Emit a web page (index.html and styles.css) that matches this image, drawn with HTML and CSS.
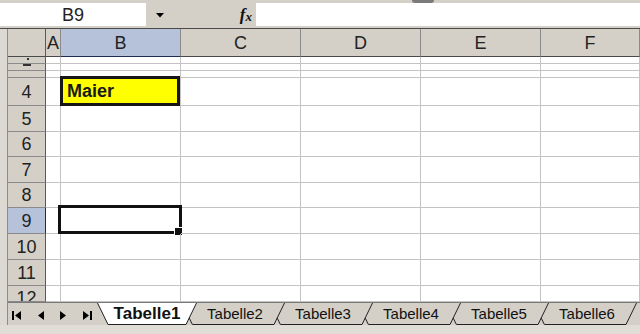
FILE: index.html
```html
<!DOCTYPE html>
<html lang="de">
<head>
  <meta charset="UTF-8" />
  <title>Tabelle1</title>
  <link rel="stylesheet" href="styles.css">
</head>
<body>

  <div class="top-line"><span class="grip"></span></div>

  <div class="formula-bar">
    <div class="name-box">B9</div>
    <div class="fb-tools">
      <svg class="dropdown" width="8" height="5" viewBox="0 0 8 5"><polygon points="0,0 8,0 4,4.5" fill="#000"/></svg>
      <span class="fx">f<sub>x</sub></span>
    </div>
    <div class="formula-input"></div>
  </div>

  <div class="workspace">
    <div class="left-strip"></div>
    <div class="sheet">
      <div class="grid">
        <div class="ch corner"></div><div class="ch">A</div><div class="ch ch-sel">B</div><div class="ch">C</div><div class="ch">D</div><div class="ch">E</div><div class="ch">F</div>

        <div class="rh rh-tiny"><span class="mark-dot"></span></div><div class="c"></div><div class="c"></div><div class="c"></div><div class="c"></div><div class="c"></div><div class="c"></div>
        <div class="rh rh-tiny"><span class="mark-dash"></span></div><div class="c"></div><div class="c"></div><div class="c"></div><div class="c"></div><div class="c"></div><div class="c"></div>
        <div class="rh rh-tiny"></div><div class="c"></div><div class="c"></div><div class="c"></div><div class="c"></div><div class="c"></div><div class="c"></div>

        <div class="rh">4</div><div class="c"></div><div class="c"><div class="name-cell">Maier</div></div><div class="c"></div><div class="c"></div><div class="c"></div><div class="c"></div>
        <div class="rh">5</div><div class="c"></div><div class="c"></div><div class="c"></div><div class="c"></div><div class="c"></div><div class="c"></div>
        <div class="rh">6</div><div class="c"></div><div class="c"></div><div class="c"></div><div class="c"></div><div class="c"></div><div class="c"></div>
        <div class="rh">7</div><div class="c"></div><div class="c"></div><div class="c"></div><div class="c"></div><div class="c"></div><div class="c"></div>
        <div class="rh">8</div><div class="c"></div><div class="c"></div><div class="c"></div><div class="c"></div><div class="c"></div><div class="c"></div>
        <div class="rh rh-sel">9</div><div class="c"></div><div class="c"><div class="selection"></div></div><div class="c"></div><div class="c"></div><div class="c"></div><div class="c"></div>
        <div class="rh">10</div><div class="c"></div><div class="c"></div><div class="c"></div><div class="c"></div><div class="c"></div><div class="c"></div>
        <div class="rh">11</div><div class="c"></div><div class="c"></div><div class="c"></div><div class="c"></div><div class="c"></div><div class="c"></div>
        <div class="rh rh-clip">12</div><div class="c"></div><div class="c"></div><div class="c"></div><div class="c"></div><div class="c"></div><div class="c"></div>
      </div>

      <div class="tabs">
        <svg class="tab-nav" width="89" height="22" viewBox="0 0 89 22">
          <rect x="4" y="8" width="2" height="9" fill="#000"/>
          <polygon points="7,12.5 13,8 13,17" fill="#000"/>
          <polygon points="30,12.5 36,8 36,17" fill="#000"/>
          <polygon points="52,8 58,12.5 52,17" fill="#000"/>
          <polygon points="75,8 81,12.5 75,17" fill="#000"/>
          <rect x="82" y="8" width="2" height="9" fill="#000"/>
        </svg>

        <svg class="tab-edge" viewBox="0 0 12 22">
          <polygon points="0.5,0 12,0 12,21 11,21" fill="#fff"/>
          <path d="M0.5 0 L11 21.5 M11 21.5 H12"/>
        </svg>
        <div class="tab active">Tabelle1</div>
        <svg class="tab-edge" viewBox="0 0 12 22">
          <polygon points="0,0 11.5,0 1,21 0,21" fill="#fff"/>
          <path d="M1 21.5 L11.5 0 M4.2 15 L7.4 21.5 M0 21.5 H1 M7.4 21.5 H12"/>
        </svg>
        <div class="tab">Tabelle2</div>
        <svg class="tab-edge" viewBox="0 0 12 22"><path d="M1 21.5 L11.5 0 M4.2 15 L7.4 21.5 M0 21.5 H1 M7.4 21.5 H12"/></svg>
        <div class="tab">Tabelle3</div>
        <svg class="tab-edge" viewBox="0 0 12 22"><path d="M1 21.5 L11.5 0 M4.2 15 L7.4 21.5 M0 21.5 H1 M7.4 21.5 H12"/></svg>
        <div class="tab">Tabelle4</div>
        <svg class="tab-edge" viewBox="0 0 12 22"><path d="M1 21.5 L11.5 0 M4.2 15 L7.4 21.5 M0 21.5 H1 M7.4 21.5 H12"/></svg>
        <div class="tab">Tabelle5</div>
        <svg class="tab-edge" viewBox="0 0 12 22"><path d="M1 21.5 L11.5 0 M4.2 15 L7.4 21.5 M0 21.5 H1 M7.4 21.5 H12"/></svg>
        <div class="tab">Tabelle6</div>
        <svg class="tab-edge" viewBox="0 0 12 22"><path d="M1 21.5 L11.5 0 M0 21.5 H1"/></svg>
      </div>
    </div>
  </div>

  <div class="status"></div>

</body>
</html>
```

FILE: styles.css
```css
* { box-sizing: border-box; }

body {
  margin: 0;
  width: 640px;
  height: 334px;
  overflow: hidden;
  font-family: 'Liberation Sans', Arial, sans-serif;
  background-color: #fff;
  color: #1e1e1e;
}

.top-line {
  height: 3px;
  background: #d4d0c8;
}

.grip {
  display: block;
  width: 22px;
  height: 3px;
  margin-left: 412px;
  background: #7a7a7a;
  border-radius: 0 0 4px 4px;
}

/* formula bar */

.formula-bar {
  display: flex;
  height: 26px;
  padding-bottom: 2px;
  background: #d4d0c8;
  border-bottom: 1px solid #4a4a4a;
}

.name-box {
  width: 146px;
  background: #fff;
  text-align: center;
  font-size: 18px;
  line-height: 24px;
  color: #222;
}

.fb-tools {
  width: 110px;
  display: flex;
  align-items: center;
}

.dropdown {
  margin-left: 10px;
  margin-top: 1px;
}

.fx {
  margin-left: auto;
  margin-right: 4px;
  font-family: 'Liberation Serif', serif;
  font-style: italic;
  font-weight: bold;
  font-size: 17px;
  color: #111;
}

.fx sub {
  font-size: 13px;
  vertical-align: -1px;
}

.formula-input {
  flex: 1;
  background: #fff;
}

/* sheet */

.workspace {
  display: flex;
  height: 296px;
}

.left-strip {
  width: 8px;
  flex: none;
  background: #dcd9d2;
  border-right: 1px solid #8c8c8c;
}

.sheet {
  flex: 1;
  min-width: 0;
  display: flex;
  flex-direction: column;
  overflow: hidden;
}

.grid {
  display: grid;
  grid-template-columns: 38px 15px 120px 120px 120px 120px 99px;
  grid-template-rows: 28px 7px 7px 7px 28px 26px 25px 26px 25px 26px 26px 26px 16px;
  height: 273px;
  overflow: hidden;
}

.c {
  position: relative;
  border-right: 1px solid #c3c3c3;
  border-bottom: 1px solid #c3c3c3;
}

.ch,
.rh {
  display: flex;
  align-items: center;
  justify-content: center;
  overflow: hidden;
  background: #d4d0c8;
  font-size: 18px;
  color: #222;
}

.ch {
  border-right: 1px solid #8a8a8a;
  border-bottom: 1px solid #4a4a4a;
  padding-top: 1px;
}

.ch.corner {
  border-right-color: #5a5a5a;
}

.ch-sel {
  background: #b6c1da;
  border-bottom-color: #1d2b50;
}

.rh {
  border-right: 1px solid #5a5a5a;
  border-bottom: 1px solid #8a8a8a;
  padding-top: 1px;
}

.rh-sel {
  background: #b6c1da;
  border-right-color: #1d2b50;
}

.rh-tiny {
  align-items: flex-start;
  padding-top: 1px;
}

.rh-clip {
  align-items: flex-start;
  line-height: 24px;
  padding-top: 0;
}

.mark-dot {
  width: 2px;
  height: 2px;
  margin-left: 2px;
  background: #333;
}

.mark-dash {
  width: 8px;
  height: 2px;
  margin-top: -1px;
  background: #333;
}

.name-cell {
  position: absolute;
  top: -2px;
  left: -1px;
  right: 0;
  bottom: -1px;
  background: #ffff00;
  border: 3px solid #161616;
  padding-left: 4px;
  font-weight: bold;
  font-size: 18px;
  line-height: 24px;
  color: #1a1a1a;
}

.selection {
  position: absolute;
  top: -3px;
  left: -3px;
  right: -2px;
  bottom: -1px;
  border: 3px solid #111;
}

.selection::after {
  content: "";
  position: absolute;
  right: -4px;
  bottom: -5px;
  width: 7px;
  height: 7px;
  background: #111;
  border: 1px solid #fff;
}

/* sheet tabs */

.tabs {
  display: flex;
  height: 23px;
  flex: none;
  background: #d4d0c8;
  border-top: 1px solid #7a7a7a;
}

.tab-nav {
  flex: none;
}

.tab-edge {
  width: 12px;
  height: 22px;
  flex: none;
  fill: none;
  stroke: #222;
  stroke-width: 1;
}

.tab-edge polygon {
  stroke: none;
}

.tab {
  width: 76px;
  height: 22px;
  flex: none;
  border-bottom: 1px solid #222;
  text-align: center;
  font-size: 15px;
  line-height: 22px;
  color: #111;
}

.tab.active {
  background: #fff;
  font-weight: bold;
  font-size: 17px;
}

.status {
  height: 9px;
  background: #e0ddd6;
}
```
